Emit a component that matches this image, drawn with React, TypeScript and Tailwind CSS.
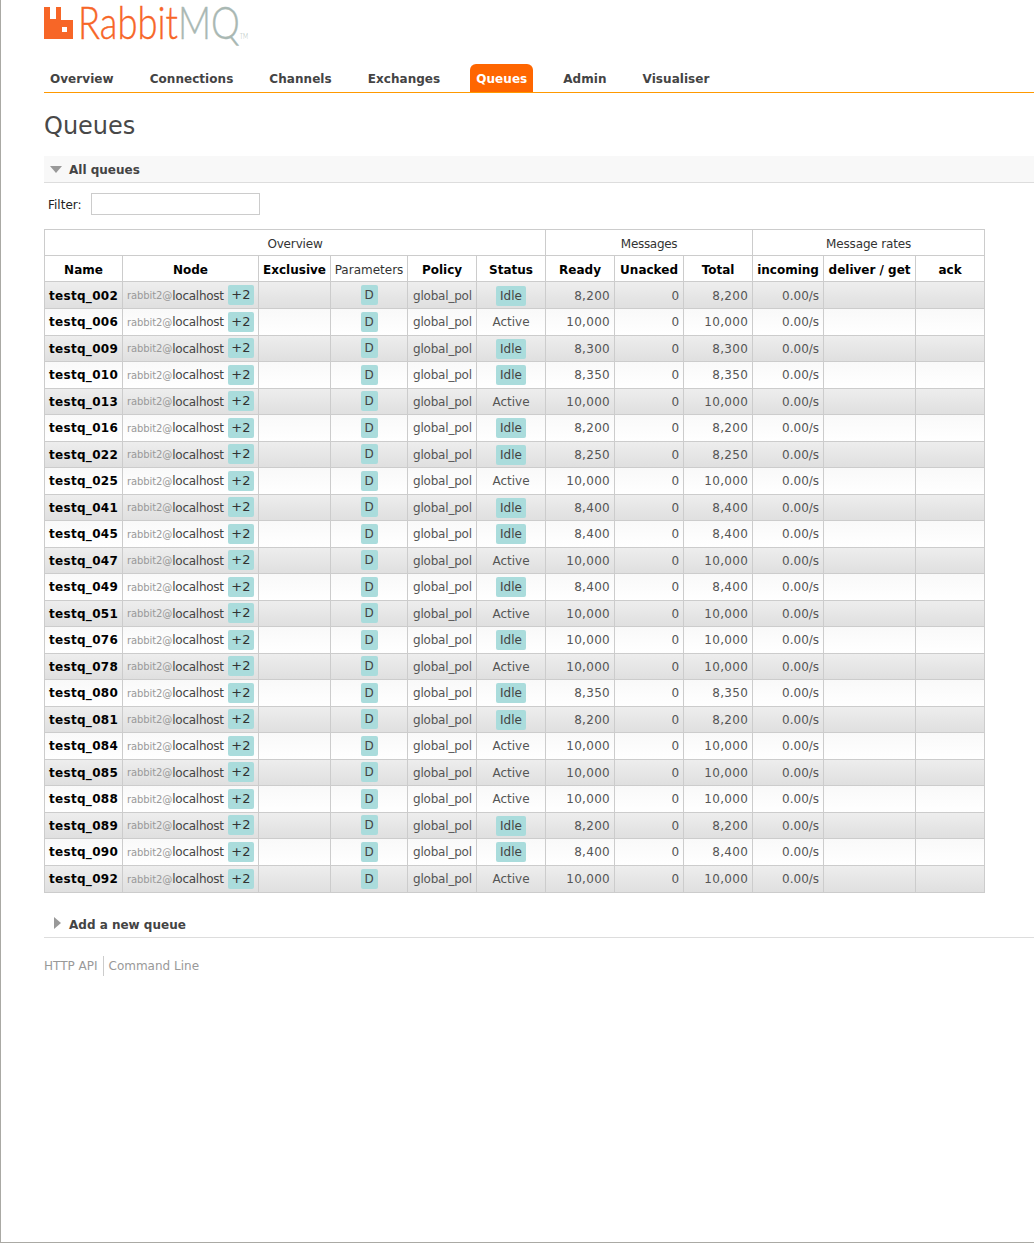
import React from 'react';

const navItems = ['Overview', 'Connections', 'Channels', 'Exchanges', 'Queues', 'Admin', 'Visualiser'];

type Queue = { name: string; status: 'Idle' | 'Active'; ready: string };

const queues: Queue[] = [
  { name: 'testq_002', status: 'Idle', ready: '8,200' },
  { name: 'testq_006', status: 'Active', ready: '10,000' },
  { name: 'testq_009', status: 'Idle', ready: '8,300' },
  { name: 'testq_010', status: 'Idle', ready: '8,350' },
  { name: 'testq_013', status: 'Active', ready: '10,000' },
  { name: 'testq_016', status: 'Idle', ready: '8,200' },
  { name: 'testq_022', status: 'Idle', ready: '8,250' },
  { name: 'testq_025', status: 'Active', ready: '10,000' },
  { name: 'testq_041', status: 'Idle', ready: '8,400' },
  { name: 'testq_045', status: 'Idle', ready: '8,400' },
  { name: 'testq_047', status: 'Active', ready: '10,000' },
  { name: 'testq_049', status: 'Idle', ready: '8,400' },
  { name: 'testq_051', status: 'Active', ready: '10,000' },
  { name: 'testq_076', status: 'Idle', ready: '10,000' },
  { name: 'testq_078', status: 'Active', ready: '10,000' },
  { name: 'testq_080', status: 'Idle', ready: '8,350' },
  { name: 'testq_081', status: 'Idle', ready: '8,200' },
  { name: 'testq_084', status: 'Active', ready: '10,000' },
  { name: 'testq_085', status: 'Active', ready: '10,000' },
  { name: 'testq_088', status: 'Active', ready: '10,000' },
  { name: 'testq_089', status: 'Idle', ready: '8,200' },
  { name: 'testq_090', status: 'Idle', ready: '8,400' },
  { name: 'testq_092', status: 'Active', ready: '10,000' },
];

const colWidths = [78, 136, 72, 77, 69, 69, 69, 69, 69, 71, 92, 69];
const columns = ['Name', 'Node', 'Exclusive', 'Parameters', 'Policy', 'Status', 'Ready', 'Unacked', 'Total', 'incoming', 'deliver / get', 'ack'];

const Badge = ({ children, className = '' }: { children: React.ReactNode; className?: string }) => (
  <span className={`inline-block h-5 leading-5 rounded-[2px] bg-[#aadcdc] text-center ${className}`}>{children}</span>
);

const Logo = () => (
  <div className="flex items-start h-[40px]">
    <svg width="29" height="32" viewBox="0 0 29 32" className="mt-[7px] shrink-0">
      <path fill="#f76627" fillRule="evenodd" d="M0 0H6V12H12V0H17V13H29V32H0ZM18 20H23V25H18Z" />
    </svg>
    <span className="inline-block origin-left scale-x-[0.79] font-['Lato',sans-serif] font-light [-webkit-text-stroke:0.4px] text-[46px] leading-[43px] ml-[5px] whitespace-nowrap">
      <span className="text-[#f76627]">Rabbit</span>
      <span className="text-[#a9b8b3]">MQ</span>
      <span className="text-[7px] text-[#a9b8b3] leading-none [-webkit-text-stroke:0px]">TM</span>
    </span>
  </div>
);

const SectionHeader = ({ open, title }: { open: boolean; title: string }) => (
  <div className={`flex items-center h-[27px] border-b border-[#dddddd] ${open ? 'bg-[#f8f8f8]' : ''}`}>
    {open ? (
      <svg width="12" height="7" viewBox="0 0 12 7" className="ml-[6px] shrink-0">
        <path fill="#999999" d="M0 0H12L6 7Z" />
      </svg>
    ) : (
      <svg width="7" height="12" viewBox="0 0 7 12" className="ml-[10px] -mt-[3px] shrink-0">
        <path fill="#999999" d="M0 0L7 6L0 12Z" />
      </svg>
    )}
    <span className={`font-bold text-[#444444] pt-[2px] ${open ? 'ml-[7px]' : 'ml-[8px]'}`}>{title}</span>
  </div>
);

export default function App() {
  return (
    <div className="min-h-[1243px] bg-white border-l border-b border-[#aaa9a4] font-['DejaVu_Sans',sans-serif] text-[12px] text-[#444444] overflow-hidden">
      <div className="pl-[43px]">
        <Logo />

        <div className="flex items-end h-[53px] border-b border-[#ff9900] pl-[6px]">
          {navItems.map((item) => (
            <a
              key={item}
              className={
                item === 'Queues'
                  ? 'h-[28px] leading-[30px] px-[6px] mr-[30px] -ml-[6px] rounded-t-[6px] bg-[#ff6600] text-white font-bold text-[12px] tracking-[0.05px]'
                  : 'h-[28px] leading-[30px] mr-[36px] font-bold text-[12px] tracking-[0.05px] text-[#444444]'
              }
            >
              {item}
            </a>
          ))}
        </div>

        <h1 className="text-[24px] leading-[30px] text-[#484848] mt-[18px] mb-[15px]">Queues</h1>

        <SectionHeader open title="All queues" />

        <div className="flex items-center h-[22px] mt-[10px] mb-[14px] pl-[4px] text-[#222222]">
          <span className="pt-[1px]">Filter:</span>
          <input className="ml-[9px] w-[169px] h-[22px] border border-[#cccccc] bg-white" />
        </div>

        <table className="table-fixed border-collapse w-[941px] text-[12px]">
          <colgroup>
            {colWidths.map((w, i) => (
              <col key={i} style={{ width: w }} />
            ))}
          </colgroup>
          <thead>
            <tr className="h-[26px]">
              <th colSpan={6} className="border border-[#cccccc] pt-[2px] font-normal tracking-[-0.15px] text-[#333333]">Overview</th>
              <th colSpan={3} className="border border-[#cccccc] pt-[2px] font-normal tracking-[-0.3px] text-[#333333]">Messages</th>
              <th colSpan={3} className="border border-[#cccccc] pt-[2px] font-normal tracking-[-0.15px] text-[#333333]">Message rates</th>
            </tr>
            <tr className="h-[26px]">
              {columns.map((c) => (
                <th
                  key={c}
                  className={`border border-[#cccccc] pt-[2px] whitespace-nowrap ${c === 'Parameters' ? 'font-normal text-[#333333]' : 'font-bold text-black'}`}
                >
                  {c}
                </th>
              ))}
            </tr>
          </thead>
          <tbody>
            {queues.map((q, i) => (
              <tr
                key={q.name}
                className={`${i === 0 ? 'h-[27.2px]' : i === queues.length - 1 ? 'h-[27.5px]' : 'h-[26.5px]'} ${i % 2 === 0 ? 'bg-gradient-to-b from-[#eeeeee] to-[#dfdfdf]' : 'bg-gradient-to-b from-[#f9f9f9] to-[#ffffff]'}`}
              >
                <td className="border border-[#cccccc] pl-[4px] pt-[1px] font-bold text-[12px] tracking-[0.3px] text-black whitespace-nowrap">{q.name}</td>
                <td className="border border-[#cccccc] pl-[4px] whitespace-nowrap">
                  <div className="flex items-center">
                    <span className="text-[10px] pt-[1px] tracking-[-0.1px] text-[#999999]">rabbit2@</span>
                    <span className="text-[12px] pt-[1px] tracking-[-0.25px] text-[#444444]">localhost</span>
                    <Badge className="ml-[4px] w-[26px] text-[13px] text-[#333333]">+2</Badge>
                  </div>
                </td>
                <td className="border border-[#cccccc]" />
                <td className="border border-[#cccccc] text-center">
                  <Badge className="w-[17px] text-[#444444]">D</Badge>
                </td>
                <td className="border border-[#cccccc] pt-[1px] pl-[5px] text-left tracking-[-0.2px] text-[#555555]">global_pol</td>
                <td className="border border-[#cccccc] pt-[1px] text-center text-[#555555]">
                  {q.status === 'Idle' ? <Badge className="w-[30px] text-[#444444]">Idle</Badge> : 'Active'}
                </td>
                <td className="border border-[#cccccc] pt-[1px] text-right pr-[4px] text-[#555555] tracking-[0.3px]">{q.ready}</td>
                <td className="border border-[#cccccc] pt-[1px] text-right pr-[4px] text-[#555555]">0</td>
                <td className="border border-[#cccccc] pt-[1px] text-right pr-[4px] text-[#555555] tracking-[0.3px]">{q.ready}</td>
                <td className="border border-[#cccccc] pt-[1px] text-right pr-[4px] text-[#555555]">0.00/s</td>
                <td className="border border-[#cccccc]" />
                <td className="border border-[#cccccc]" />
              </tr>
            ))}
          </tbody>
        </table>

        <div className="mt-[18px]">
          <SectionHeader open={false} title="Add a new queue" />
        </div>

        <div className="flex items-center mt-[18px] text-[#999999]">
          <span className="pr-[5px] border-r border-[#cccccc] leading-[20px]">HTTP API</span>
          <span className="pl-[5px]">Command Line</span>
        </div>
      </div>
    </div>
  );
}
